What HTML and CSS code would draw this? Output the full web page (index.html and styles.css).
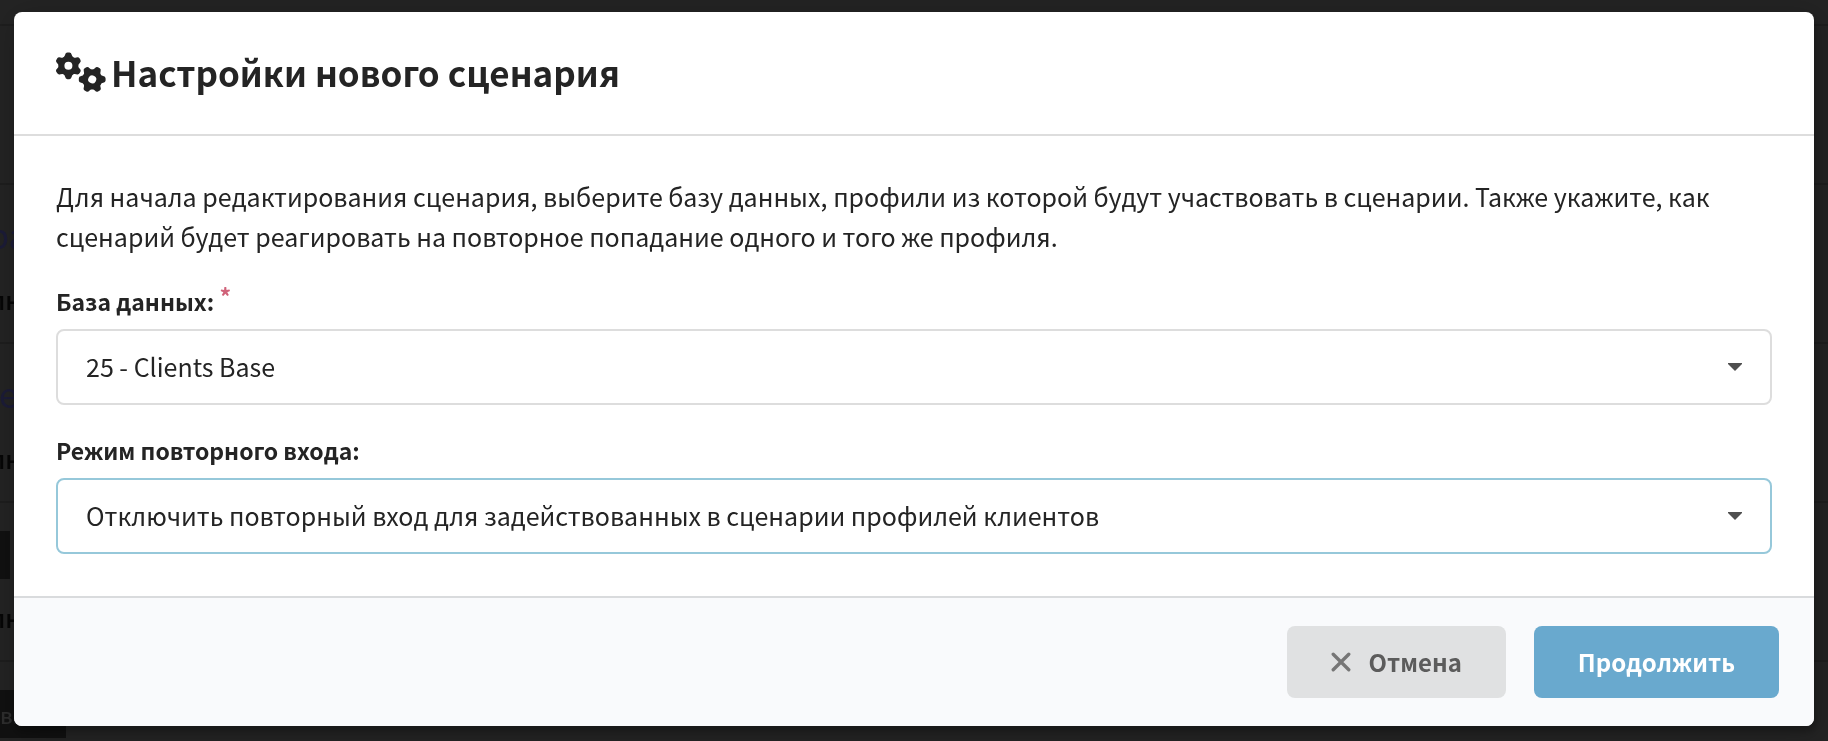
FILE: index.html
```html
<!DOCTYPE html>
<html lang="ru">
<head>
    <meta charset="UTF-8">
    <meta name="viewport" content="width=device-width, initial-scale=1.0">
    <title>Настройки нового сценария</title>
    <link rel="stylesheet" href="styles.css">
</head>
<body>
    <!-- Dimmed page under the modal -->
    <div class="page" aria-hidden="true">
        <div class="page-top"></div>
        <div class="page-row"></div>
        <div class="page-row"><span class="row-link">ра</span><span class="row-text">лн</span></div>
        <div class="page-row"><span class="row-link row-link-short">е</span><span class="row-text">лн</span></div>
        <div class="page-row"><span class="row-box"></span><span class="row-text">лн</span></div>
        <div class="page-row"><span class="row-box row-box-wide">вк</span></div>
    </div>

    <div class="modal" role="dialog" aria-labelledby="modalTitle">
        <header class="modal-header">
            <svg class="gears" viewBox="0 0 50 40" aria-hidden="true">
                <defs>
                    <path id="tooth" d="M-5 -8 Q-3.6 -9.4 -3.3 -11 Q-2.8 -13.4 -1 -13.4 H1 Q2.8 -13.4 3.3 -11 Q3.6 -9.4 5 -8 Z" fill="currentColor"/>
                    <g id="gear">
                        <circle r="7" fill="none" stroke="currentColor" stroke-width="6"/>
                        <use href="#tooth"/>
                        <use href="#tooth" transform="rotate(60)"/>
                        <use href="#tooth" transform="rotate(120)"/>
                        <use href="#tooth" transform="rotate(180)"/>
                        <use href="#tooth" transform="rotate(240)"/>
                        <use href="#tooth" transform="rotate(300)"/>
                    </g>
                </defs>
                <use href="#gear" transform="translate(12.4 13.8)"/>
                <use href="#gear" transform="translate(36.2 27.4) rotate(30)"/>
            </svg>
            <h1 id="modalTitle">Настройки нового сценария</h1>
        </header>

        <form class="modal-form">
            <div class="modal-content">
                <p>Для начала редактирования сценария, выберите базу данных, профили из которой будут участвовать в сценарии. Также укажите, как сценарий будет реагировать на повторное попадание одного и того же профиля.</p>
                <div class="field">
                    <label for="database">База данных: <span class="required">*</span></label>
                    <select id="database" required>
                        <option>25 - Clients Base</option>
                    </select>
                </div>
                <div class="field">
                    <label for="mode">Режим повторного входа:</label>
                    <select id="mode" class="active">
                        <option>Отключить повторный вход для задействованных в сценарии профилей клиентов</option>
                    </select>
                </div>
            </div>
            <footer class="modal-actions">
                <button type="button" class="button">
                    <svg class="cross" viewBox="0 0 18 18" aria-hidden="true">
                        <path d="M2 2 L16 16 M16 2 L2 16"/>
                    </svg>
                    Отмена
                </button>
                <button type="submit" class="button primary">Продолжить</button>
            </footer>
        </form>
    </div>
</body>
</html>
```
FILE: styles.css
```css
/* General Styles */
* {
    box-sizing: border-box;
}
body {
    margin: 0;
    min-height: 100vh;
    padding: 12px 14px;
    background: #242424;
    color: #242424;
    font-family: 'Noto Sans CJK SC', 'Noto Sans', sans-serif;
    font-size: 25px;
    line-height: 40px;
}

/* Dimmed Page */
.page {
    position: fixed;
    inset: 0;
    overflow: hidden;
}
.page-top {
    height: 24px;
}
.page-row {
    display: flex;
    flex-direction: column;
    align-items: flex-start;
    justify-content: space-between;
    height: 159px;
    padding: 28px 0 23px;
    border-top: 2px solid #1e1e1e;
}
.row-link {
    margin-left: -12px;
    font-size: 34px;
    line-height: 44px;
    color: #1c1c38;
}
.row-link-short {
    margin-left: -1px;
}
.row-text {
    margin-left: -10px;
    font-weight: 500;
    color: #060606;
}
.row-box {
    width: 10px;
    height: 48px;
    background: #111;
}
.row-box-wide {
    width: 66px;
    font-size: 22px;
    font-weight: 500;
    line-height: 48px;
    color: #2e2e2e;
}

/* Modal */
.modal {
    position: relative;
    background: #fff;
    border-radius: 8px;
    overflow: hidden;
    box-shadow: 2px 6px 6px rgba(0, 0, 0, 0.2), 2px 6px 30px 4px rgba(0, 0, 0, 0.2);
}
.modal-header {
    display: flex;
    align-items: center;
    gap: 5px;
    padding: 35px 42px 37px;
    border-bottom: 2px solid #ddd;
}
.gears {
    width: 50px;
    height: 40px;
}
.modal-header h1 {
    margin: 0;
    font-size: 35px;
    font-weight: 600;
    line-height: 50px;
}
.modal-content {
    padding: 40px 42px 42px;
}
.modal-content p {
    margin: 0 0 28px;
}

/* Form Section */
.field + .field {
    margin-top: 28px;
}
.field label {
    display: block;
    margin-bottom: 11px;
    font-size: 23px;
    font-weight: 600;
    line-height: 34px;
}
.required {
    display: inline-block;
    height: 34px;
    line-height: 24px;
    color: #d0637a;
    vertical-align: top;
}
.field select {
    display: block;
    width: 100%;
    height: 76px;
    padding: 0 60px 2px 28px;
    border: 2px solid #ddd;
    border-radius: 8px;
    appearance: none;
    background: #fff url("data:image/svg+xml,%3Csvg xmlns='http://www.w3.org/2000/svg' width='14' height='8'%3E%3Cpath d='M0 0H14V1L7 8L0 1Z' fill='%234f4f4f'/%3E%3C/svg%3E") no-repeat right 28px center;
    color: inherit;
    font: inherit;
}
.field select.active {
    border-color: #96c8da;
}

/* Actions */
.modal-actions {
    display: flex;
    justify-content: flex-end;
    gap: 28px;
    padding: 28px 35px;
    background: #f9fafc;
    border-top: 2px solid #d9dbdd;
}
.button {
    display: flex;
    align-items: center;
    gap: 18px;
    padding: 16px 44px;
    border: none;
    border-radius: 8px;
    background: #e0e1e2;
    color: #5c5c5c;
    font: inherit;
    font-size: 24px;
    font-weight: 600;
    line-height: 40px;
    cursor: pointer;
}
.button.primary {
    background: #69a9ce;
    color: #fff;
}
.cross {
    width: 20px;
    height: 20px;
    fill: none;
    stroke: #767676;
    stroke-width: 3;
    stroke-linecap: round;
}
```
